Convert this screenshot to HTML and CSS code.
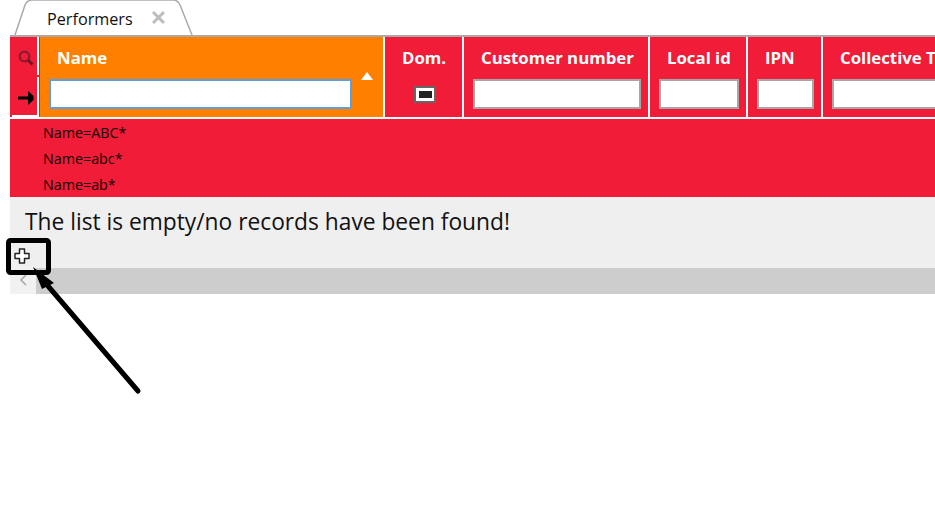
FILE: index.html
```html
<!DOCTYPE html>
<html lang="en">
<head>
  <meta charset="UTF-8">
  <title>Performers</title>
  <link rel="stylesheet" href="styles.css">
</head>
<body>

  <div class="tab-strip">
    <div class="tab">
      <svg class="tab-shape" width="180" height="35" viewBox="0 0 180 35">
        <path d="M1 35 L11 5 Q13 0 18 0 L159 0 Q164 0 166 5 L178 35" fill="#fff" stroke="#aaa" stroke-width="1.5"/>
      </svg>
      <span class="tab-title">Performers</span>
      <svg class="tab-close" width="15" height="15" viewBox="0 0 15 15">
        <path d="M2 2 L13 13 M13 2 L2 13" stroke="#bdbdbd" stroke-width="3"/>
      </svg>
    </div>
  </div>

  <div class="grid">
    <div class="grid-header">
      <div class="tools">
        <div class="tool">
          <svg width="16" height="16" viewBox="0 0 16 16">
            <circle cx="6.5" cy="6.5" r="4.8" fill="none" stroke="#8e1a30" stroke-width="2.2"/>
            <path d="M10 10 L14.5 14.5" stroke="#6e1426" stroke-width="2.8"/>
          </svg>
        </div>
        <div class="tool tool-last">
          <svg width="16" height="14" viewBox="0 0 16 14">
            <path d="M0 7 H11" stroke="#000" stroke-width="3"/>
            <path d="M10 0 L15.5 5 V9 L10 14 Z" fill="#000"/>
          </svg>
        </div>
      </div>

      <div class="col col-name">
        <div class="col-label">Name</div>
        <input class="col-input col-input-active" type="text">
        <span class="sort-arrow"></span>
      </div>
      <div class="col col-dom">
        <div class="col-label">Dom.</div>
        <div class="tri-check"><span></span></div>
      </div>
      <div class="col col-customer">
        <div class="col-label">Customer number</div>
        <input class="col-input" type="text">
      </div>
      <div class="col col-local">
        <div class="col-label">Local id</div>
        <input class="col-input" type="text">
      </div>
      <div class="col col-ipn">
        <div class="col-label">IPN</div>
        <input class="col-input" type="text">
      </div>
      <div class="col col-collective">
        <div class="col-label">Collective Type</div>
        <input class="col-input" type="text">
      </div>
    </div>

    <div class="filters">
      <div class="filter">Name=ABC*</div>
      <div class="filter">Name=abc*</div>
      <div class="filter">Name=ab*</div>
    </div>

    <div class="empty">
      <p class="empty-text">The list is empty/no records have been found!</p>
      <svg class="add-icon" width="16" height="16" viewBox="0 0 16 16">
        <path d="M5.5 1 H10.5 V5.5 H15 V10.5 H10.5 V15 H5.5 V10.5 H1 V5.5 H5.5 Z" fill="#fff" stroke="#222" stroke-width="1.5" stroke-linejoin="round"/>
      </svg>
    </div>

    <div class="scrollbar">
      <div class="scroll-btn">
        <svg width="8" height="12" viewBox="0 0 8 12">
          <path d="M7 1 L2 6 L7 11" fill="none" stroke="#a8a8a8" stroke-width="1.6"/>
        </svg>
      </div>
      <div class="scroll-track"></div>
    </div>
  </div>

  <!-- annotation drawn on top of the screenshot -->
  <svg class="annotation" width="160" height="170" viewBox="0 0 160 170">
    <rect x="4.5" y="2.5" width="40" height="32" rx="2" fill="none" stroke="#000" stroke-width="5"/>
    <path d="M134 153 L44 48" stroke="#000" stroke-width="5" stroke-linecap="round"/>
    <path d="M29 29 L50 45 L38 51 Z" fill="#000"/>
  </svg>

</body>
</html>
```

FILE: styles.css
```css
/* Page */
body {
  margin: 0;
  height: 529px;
  overflow: hidden;
  background: #fff;
  font-family: 'Open Sans', sans-serif;
  position: relative;
}

/* Tabs */
.tab-strip {
  height: 35px;
  padding-left: 14px;
}
.tab {
  position: relative;
  width: 180px;
  height: 35px;
  display: flex;
  align-items: center;
  padding-left: 33px;
  box-sizing: border-box;
}
.tab-shape {
  position: absolute;
  left: 0;
  top: 0;
}
.tab-title {
  position: relative;
  font-size: 16.2px;
  color: #111;
  width: 104px;
  margin-top: 2px;
}
.tab-close {
  position: relative;
  margin-top: 0;
}

/* Grid */
.grid {
  margin-left: 10px;
}
.grid-header {
  display: flex;
  height: 80px;
  border-top: 2px solid #aaa;
  border-bottom: 2px solid #fff;
  background: #f01c38;
  overflow: hidden;
}
.tools {
  width: 30px;
  flex: none;
  display: flex;
  flex-direction: column;
  gap: 2px;
}
.tool {
  width: 29px;
  height: 38px;
  display: flex;
  align-items: center;
  justify-content: center;
  border-right: 2px solid #fff;
  padding: 3px 0 0 5px;
  box-sizing: border-box;
}
.tool-last {
  width: 27px;
  height: 40px;
  margin-left: 2px;
  padding-left: 2px;
  border-bottom: 2px solid #fff;
}
.col {
  position: relative;
  flex: none;
  box-sizing: border-box;
  border-right: 2px solid #fff;
  height: 80px;
}
.col-label {
  position: absolute;
  top: 9px;
  color: #fff;
  font-size: 16.8px;
  font-weight: 700;
  line-height: 24px;
  white-space: nowrap;
}
.col-input {
  position: absolute;
  top: 42px;
  height: 30px;
  box-sizing: border-box;
  border: 2px solid #a6a6a6;
  background: #fff;
  padding: 0;
  margin: 0;
  outline: none;
}
.col-input-active {
  border-color: #5c9fe0;
}

.col-name {
  width: 345px;
  background: #ff8000;
}
.col-name .col-label { left: 17px; }
.col-name .col-input { left: 9px; width: 303px; }
.sort-arrow {
  position: absolute;
  left: 321px;
  top: 35px;
  border-left: 6px solid transparent;
  border-right: 6px solid transparent;
  border-bottom: 8px solid #fff;
}

.col-dom { width: 79px; }
.col-dom .col-label { left: 17px; }
.tri-check {
  position: absolute;
  left: 29px;
  top: 49px;
  width: 22px;
  height: 17px;
  box-sizing: border-box;
  border: 2px solid #666;
  background: #fff;
  display: flex;
  align-items: center;
  justify-content: center;
}
.tri-check span {
  width: 13px;
  height: 7px;
  background: #222;
}

.col-customer { width: 186px; }
.col-customer .col-label { left: 17px; }
.col-customer .col-input { left: 9px; width: 168px; }

.col-local { width: 98px; }
.col-local .col-label { left: 17px; }
.col-local .col-input { left: 9px; width: 80px; }

.col-ipn { width: 75px; }
.col-ipn .col-label { left: 17px; }
.col-ipn .col-input { left: 9px; width: 57px; }

.col-collective { width: 200px; border-right: 0; }
.col-collective .col-label { left: 17px; }
.col-collective .col-input { left: 9px; width: 180px; }

/* Active filters */
.filters {
  background: #f01c38;
  height: 78px;
  padding-left: 33px;
  color: #120003;
  font-size: 14.3px;
  line-height: 25.75px;
  padding-top: 1px;
  box-sizing: border-box;
}

/* Empty message */
.empty {
  background: #efefef;
  height: 71px;
  padding-left: 15px;
}
.empty-text {
  margin: 0;
  padding-top: 8px;
  font-size: 22.75px;
  line-height: 34px;
  color: #111;
}
.add-icon {
  display: block;
  margin: 9px 0 0 -11px;
}

/* Scrollbar */
.scrollbar {
  display: flex;
  height: 26px;
}
.scroll-btn {
  width: 26px;
  background: #f1f1f1;
  display: flex;
  align-items: center;
  justify-content: center;
  padding-bottom: 2px;
  box-sizing: border-box;
}
.scroll-track {
  flex: 1;
  background: #cdcdcd;
}

.annotation {
  position: absolute;
  left: 4px;
  top: 238px;
}
```
